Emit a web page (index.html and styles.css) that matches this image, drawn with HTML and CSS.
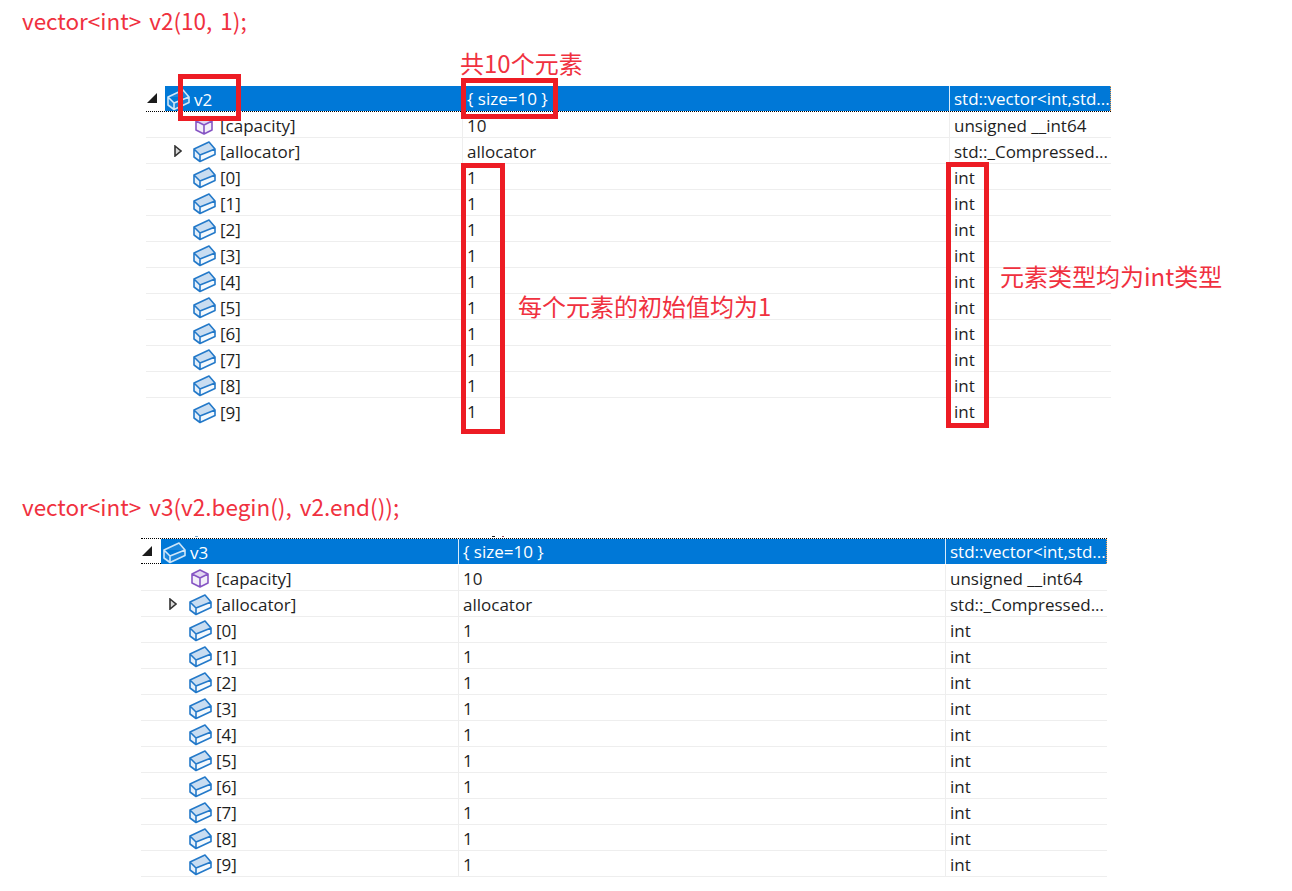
FILE: index.html
```html
<!DOCTYPE html>
<html lang="zh">
<head>
<meta charset="utf-8">
<title>vector</title>
<link rel="stylesheet" href="styles.css">
</head>
<body>
<svg class="defs" width="0" height="0" aria-hidden="true">
  <symbol id="box" viewBox="0 0 23 22">
    <path d="M1 8 16 1 22 8 7 14Z" fill="#c9ddf1"/>
    <path d="M1 8V16L7 20.5V14Z" fill="#e6f0fa"/>
    <path d="M7 14V20.5L22 13.5V8Z" fill="#f4f9fd"/>
    <path d="M1 8 16 1 22 8V13.5L7 20.5 1 16ZM1 8 7 14 22 8M7 14V20.5" fill="none" stroke="#2379c9" stroke-width="1.6" stroke-linejoin="round"/>
  </symbol>
  <symbol id="boxw" viewBox="0 0 23 22">
    <path d="M1 8 16 1 22 8V13.5L7 20.5 1 16ZM1 8 7 14 22 8M7 14V20.5" fill="#1a86dc" stroke="#cfe6f8" stroke-width="1.6" stroke-linejoin="round"/>
  </symbol>
  <symbol id="cube" viewBox="0 0 18 19">
    <path d="M9 1 17 5V14L9 18 1 14V5Z" fill="#f3eff9"/>
    <path d="M9 1 17 5 9 9 1 5Z" fill="#e2d8f1"/>
    <path d="M9 1 17 5V14L9 18 1 14V5ZM1 5 9 9 17 5M9 9V18" fill="none" stroke="#8655c4" stroke-width="1.6" stroke-linejoin="round"/>
  </symbol>
  <symbol id="open" viewBox="0 0 10 10"><path d="M10 0V10H0Z" fill="#1b1b1b"/></symbol>
  <symbol id="closed" viewBox="0 0 8 12"><path d="M1 1 7 6 1 11Z" fill="#d8d8d8" stroke="#333" stroke-width="1.6"/></symbol>
</svg>

<section class="block first">
  <h2 class="code">vector&lt;int&gt; v2(10, 1);</h2>
  <div class="watch">
    <div class="row head">
      <div class="name"><svg class="arrow-open"><use href="#open"/></svg><div class="bar"><svg class="ico"><use href="#boxw"/></svg><span>v2</span></div></div>
      <div class="val">{ size=10 }</div>
      <div class="typ">std::vector&lt;int,std...</div>
    </div>
    <div class="row"><div class="name sub"><svg class="ico-c"><use href="#cube"/></svg><span>[capacity]</span></div><div class="val">10</div><div class="typ">unsigned __int64</div></div>
    <div class="row"><div class="name sub"><svg class="arrow-closed"><use href="#closed"/></svg><svg class="ico"><use href="#box"/></svg><span>[allocator]</span></div><div class="val">allocator</div><div class="typ">std::_Compressed...</div></div>
    <div class="row"><div class="name sub"><svg class="ico"><use href="#box"/></svg><span>[0]</span></div><div class="val">1</div><div class="typ">int</div></div>
    <div class="row"><div class="name sub"><svg class="ico"><use href="#box"/></svg><span>[1]</span></div><div class="val">1</div><div class="typ">int</div></div>
    <div class="row"><div class="name sub"><svg class="ico"><use href="#box"/></svg><span>[2]</span></div><div class="val">1</div><div class="typ">int</div></div>
    <div class="row"><div class="name sub"><svg class="ico"><use href="#box"/></svg><span>[3]</span></div><div class="val">1</div><div class="typ">int</div></div>
    <div class="row"><div class="name sub"><svg class="ico"><use href="#box"/></svg><span>[4]</span></div><div class="val">1</div><div class="typ">int</div></div>
    <div class="row"><div class="name sub"><svg class="ico"><use href="#box"/></svg><span>[5]</span></div><div class="val">1</div><div class="typ">int</div></div>
    <div class="row"><div class="name sub"><svg class="ico"><use href="#box"/></svg><span>[6]</span></div><div class="val">1</div><div class="typ">int</div></div>
    <div class="row"><div class="name sub"><svg class="ico"><use href="#box"/></svg><span>[7]</span></div><div class="val">1</div><div class="typ">int</div></div>
    <div class="row"><div class="name sub"><svg class="ico"><use href="#box"/></svg><span>[8]</span></div><div class="val">1</div><div class="typ">int</div></div>
    <div class="row last"><div class="name sub"><svg class="ico"><use href="#box"/></svg><span>[9]</span></div><div class="val">1</div><div class="typ">int</div></div>
  </div>
  <div class="mark mark-name"></div>
  <div class="mark mark-size"></div>
  <div class="mark mark-vals"></div>
  <div class="mark mark-types"></div>
  <p class="note note-count">共10个元素</p>
  <p class="note note-init">每个元素的初始值均为1</p>
  <p class="note note-type">元素类型均为int类型</p>
</section>

<section class="block second">
  <h2 class="code">vector&lt;int&gt; v3(v2.begin(), v2.end());</h2>
  <i class="speck speck-a"></i><i class="speck speck-b"></i><i class="speck speck-c"></i>
  <div class="watch">
    <div class="row head">
      <div class="name"><svg class="arrow-open"><use href="#open"/></svg><div class="bar"><svg class="ico"><use href="#boxw"/></svg><span>v3</span></div></div>
      <div class="val">{ size=10 }</div>
      <div class="typ">std::vector&lt;int,std...</div>
    </div>
    <div class="row"><div class="name sub"><svg class="ico-c"><use href="#cube"/></svg><span>[capacity]</span></div><div class="val">10</div><div class="typ">unsigned __int64</div></div>
    <div class="row"><div class="name sub"><svg class="arrow-closed"><use href="#closed"/></svg><svg class="ico"><use href="#box"/></svg><span>[allocator]</span></div><div class="val">allocator</div><div class="typ">std::_Compressed...</div></div>
    <div class="row"><div class="name sub"><svg class="ico"><use href="#box"/></svg><span>[0]</span></div><div class="val">1</div><div class="typ">int</div></div>
    <div class="row"><div class="name sub"><svg class="ico"><use href="#box"/></svg><span>[1]</span></div><div class="val">1</div><div class="typ">int</div></div>
    <div class="row"><div class="name sub"><svg class="ico"><use href="#box"/></svg><span>[2]</span></div><div class="val">1</div><div class="typ">int</div></div>
    <div class="row"><div class="name sub"><svg class="ico"><use href="#box"/></svg><span>[3]</span></div><div class="val">1</div><div class="typ">int</div></div>
    <div class="row"><div class="name sub"><svg class="ico"><use href="#box"/></svg><span>[4]</span></div><div class="val">1</div><div class="typ">int</div></div>
    <div class="row"><div class="name sub"><svg class="ico"><use href="#box"/></svg><span>[5]</span></div><div class="val">1</div><div class="typ">int</div></div>
    <div class="row"><div class="name sub"><svg class="ico"><use href="#box"/></svg><span>[6]</span></div><div class="val">1</div><div class="typ">int</div></div>
    <div class="row"><div class="name sub"><svg class="ico"><use href="#box"/></svg><span>[7]</span></div><div class="val">1</div><div class="typ">int</div></div>
    <div class="row"><div class="name sub"><svg class="ico"><use href="#box"/></svg><span>[8]</span></div><div class="val">1</div><div class="typ">int</div></div>
    <div class="row"><div class="name sub"><svg class="ico"><use href="#box"/></svg><span>[9]</span></div><div class="val">1</div><div class="typ">int</div></div>
  </div>
</section>
</body>
</html>
```

FILE: styles.css
```css
* { box-sizing: border-box; }
html, body { margin: 0; padding: 0; background: #fff; }
body { width: 1292px; height: 891px; overflow: hidden; font-family: "Open Sans", "Noto Sans CJK SC", sans-serif; color: #1e1e1e; }
.defs { position: absolute; }

.block { position: relative; }
.first { height: 490px; padding-top: 6px; }
.second { height: 401px; padding-top: 2px; }

.code { margin: 0 0 0 22px; font: 400 22.5px/28px "Noto Sans CJK SC", sans-serif; word-spacing: 3px; color: #f0313f; }
.first .code { height: 80px; }
.second .code { height: 46px; }

.watch { font-size: 17px; line-height: 21px; }
.first .watch { margin-left: 146px; width: 965px; }
.second .watch { margin-left: 141px; width: 966px; }

.row { display: grid; height: 26px; border-bottom: 1px solid #eeeeee; }
.first .row { grid-template-columns: 316px 487px 162px; }
.second .row { grid-template-columns: 317px 487px 162px; }
.second .head + .row { height: 27px; padding-top: 1px; }
.row.last { border-bottom: 0; }

.name { display: flex; align-items: center; position: relative; }
.name span { margin-top: 2px; }
.sub { padding-left: 47px; }
.second .sub { padding-left: 48px; }
.val, .typ { padding: 3px 0 0 4px; border-left: 1px solid #eeeeee; white-space: nowrap; }

.ico { width: 23px; height: 22px; flex: none; margin: 3px 4px 0 0; }
.ico-c { width: 18px; height: 19px; flex: none; margin: 2px 7px 0 2px; }
.arrow-closed { position: absolute; left: 28px; top: 7px; width: 8px; height: 12px; }
.arrow-open { position: absolute; left: 1px; top: 7px; width: 10px; height: 10px; }

.head { height: 26px; border-bottom: 1px dotted #000; color: #fff; }
.second .head { border-top: 1px dotted #000; }
.head .val, .head .typ { padding-top: 2px; background: #0078d7; border-left-color: #d9ebf9; }
.head .typ { border-right: 1px dotted #f0a050; }
.bar { display: flex; align-items: center; margin-left: 19px; padding-left: 2px; flex: 1; align-self: stretch; background: #0078d7; }
.second .bar { margin-left: 20px; }

.mark { position: absolute; border: 5px solid #ed1c24; }
.mark-name { left: 178px; top: 74px; width: 63px; height: 47px; }
.mark-size { left: 461px; top: 78px; width: 97px; height: 41px; }
.mark-vals { left: 461px; top: 163px; width: 44px; height: 271px; }
.mark-types { left: 946px; top: 162px; width: 43px; height: 266px; }

.note { position: absolute; margin: 0; font: 400 24px/32px "Noto Sans CJK SC", sans-serif; color: #f0313f; white-space: nowrap; }
.note-count { left: 460px; top: 47px; }
.note-init { left: 518px; top: 290px; }
.note-type { left: 1000px; top: 260px; }

.speck { position: absolute; top: 46px; height: 1px; }
.speck-a { left: 195px; width: 3px; background: #7fa8cc; }
.speck-b { left: 492px; width: 3px; background: #222; }
.speck-c { left: 502px; width: 2px; background: #a05060; }
```
